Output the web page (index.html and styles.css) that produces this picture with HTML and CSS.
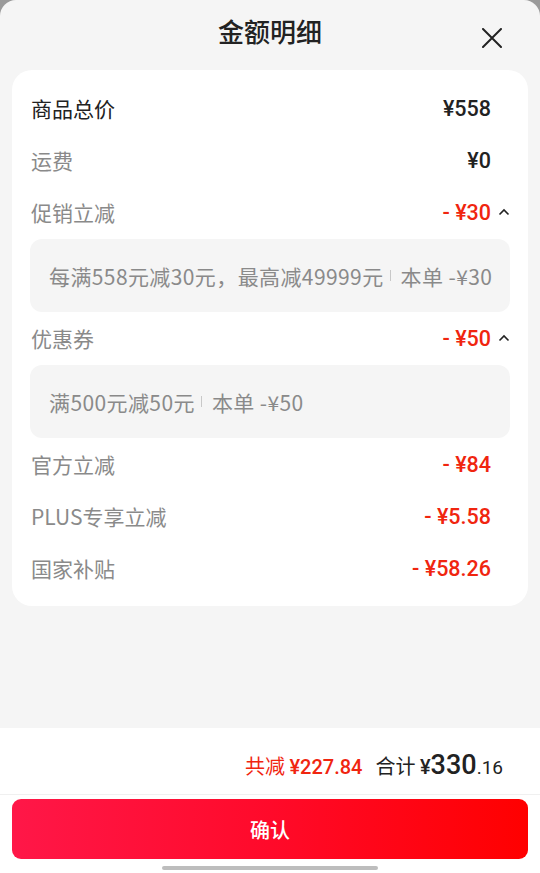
FILE: index.html
```html
<!DOCTYPE html>
<html lang="zh">
<head>
<meta charset="utf-8">
<title>金额明细</title>
<link rel="stylesheet" href="styles.css">
</head>
<body>
<div class="sheet">
  <header class="header">
    <span></span>
    <h1 class="title">金额明细</h1>
    <button class="close" aria-label="关闭">
      <svg width="20" height="20" viewBox="0 0 20 20"><path d="M1 1 L19 19 M19 1 L1 19" stroke="#222" stroke-width="2" fill="none" stroke-linecap="round"/></svg>
    </button>
  </header>

  <section class="card">
    <div class="row">
      <span class="label strong">商品总价</span>
      <span class="value dark">¥558</span>
      <span class="slot"></span>
    </div>
    <div class="row">
      <span class="label">运费</span>
      <span class="value dark">¥0</span>
      <span class="slot"></span>
    </div>
    <div class="row">
      <span class="label">促销立减</span>
      <span class="value red">- ¥30</span>
      <span class="slot"><svg width="12" height="8" viewBox="0 0 12 8"><polyline points="1.5,6.5 6,2 10.5,6.5" stroke="#222" stroke-width="1.6" fill="none"/></svg></span>
    </div>
    <div class="detail">每满558元减30元，最高减49999元<span class="sep"></span>本单 -¥30</div>
    <div class="row">
      <span class="label">优惠券</span>
      <span class="value red">- ¥50</span>
      <span class="slot"><svg width="12" height="8" viewBox="0 0 12 8"><polyline points="1.5,6.5 6,2 10.5,6.5" stroke="#222" stroke-width="1.6" fill="none"/></svg></span>
    </div>
    <div class="detail">满500元减50元<span class="sep"></span>本单 -¥50</div>
    <div class="row">
      <span class="label">官方立减</span>
      <span class="value red">- ¥84</span>
      <span class="slot"></span>
    </div>
    <div class="row">
      <span class="label">PLUS专享立减</span>
      <span class="value red">- ¥5.58</span>
      <span class="slot"></span>
    </div>
    <div class="row">
      <span class="label">国家补贴</span>
      <span class="value red">- ¥58.26</span>
      <span class="slot"></span>
    </div>
  </section>

  <div class="spacer"></div>

  <footer class="footer">
    <div class="totals">
      <span class="saved">共减 <b>¥227.84</b></span>
      <span class="sum">合计 <b class="yen">¥</b><b class="int">330</b><b class="dec">.16</b></span>
    </div>
    <button class="confirm">确认</button>
    <div class="indicator"></div>
  </footer>
</div>
</body>
</html>
```

FILE: styles.css
```css
* { box-sizing: border-box; }
html, body {
  margin: 0;
  padding: 0;
  background: #9a9a9a;
}
body {
  font-family: "Noto Sans CJK SC", "Noto Sans", sans-serif;
  width: 540px;
  height: 873px;
  overflow: hidden;
}
.sheet {
  width: 540px;
  height: 873px;
  background: #f5f5f5;
  border-radius: 16px 16px 0 0;
  display: flex;
  flex-direction: column;
}
.header {
  height: 70px;
  display: grid;
  grid-template-columns: 1fr auto 1fr;
  align-items: start;
}
.title {
  margin: 0;
  padding-top: 12px;
  font-size: 26px;
  line-height: 38px;
  font-weight: 500;
  color: #222;
}
.close {
  justify-self: end;
  margin: 28px 38px 0 0;
  padding: 0;
  border: 0;
  background: none;
  width: 20px;
  height: 20px;
  display: flex;
}
.card {
  margin: 0 12px;
  height: 536px;
  background: #fff;
  border-radius: 20px;
  padding: 12px 18px 12px 19px;
}
.row {
  height: 52px;
  display: flex;
  align-items: center;
}
.label {
  flex: 1;
  font-size: 21px;
  color: #8a8a8a;
}
.label.strong { color: #222; }
.value {
  font-family: "Roboto", "Noto Sans CJK SC", sans-serif;
  font-size: 21.5px;
  font-weight: 500;
}
.value.dark { color: #222; }
.value.red { color: #f0250f; }
.slot {
  width: 19px;
  display: flex;
  justify-content: flex-end;
  align-items: center;
}
.detail {
  margin: 1px 0 0 -1px;
  height: 73px;
  width: 480px;
  background: #f5f5f5;
  border-radius: 12px;
  padding-left: 19px;
  display: flex;
  align-items: center;
  font-size: 21px;
  letter-spacing: 0.4px;
  color: #8a8a8a;
  white-space: nowrap;
}
.sep {
  display: inline-block;
  width: 1px;
  height: 11px;
  background: #c8c8c8;
  margin: 0 10px 0 6px;
}
.spacer { flex: 1; }
.footer {
  height: 145px;
  background: #fff;
  display: flex;
  flex-direction: column;
  align-items: center;
}
.totals {
  width: 100%;
  height: 67px;
  border-bottom: 1px solid #f0f0f0;
  display: flex;
  justify-content: flex-end;
  align-items: center;
  gap: 13px;
  padding: 8px 37px 0 0;
}
.saved {
  color: #f0250f;
  font-size: 20px;
}
.saved b {
  font-family: "Roboto", sans-serif;
  font-weight: 500;
}
.sum {
  color: #222;
  font-size: 20px;
}
.sum b { font-family: "Roboto", sans-serif; font-weight: 500; }
.sum .int { font-size: 27px; }
.sum .dec { font-size: 19px; font-weight: 400; }
.confirm {
  margin-top: 4px;
  width: 516px;
  height: 60px;
  border: 0;
  border-radius: 9px;
  background: linear-gradient(90deg, #ff1748 0%, #ff0a2a 50%, #ff0000 100%);
  color: #fff;
  font-family: "Noto Sans CJK SC", sans-serif;
  font-size: 20px;
  font-weight: 500;
}
.indicator {
  margin-top: 7px;
  width: 216px;
  height: 4px;
  border-radius: 2px;
  background: #bdbdbd;
}
```
